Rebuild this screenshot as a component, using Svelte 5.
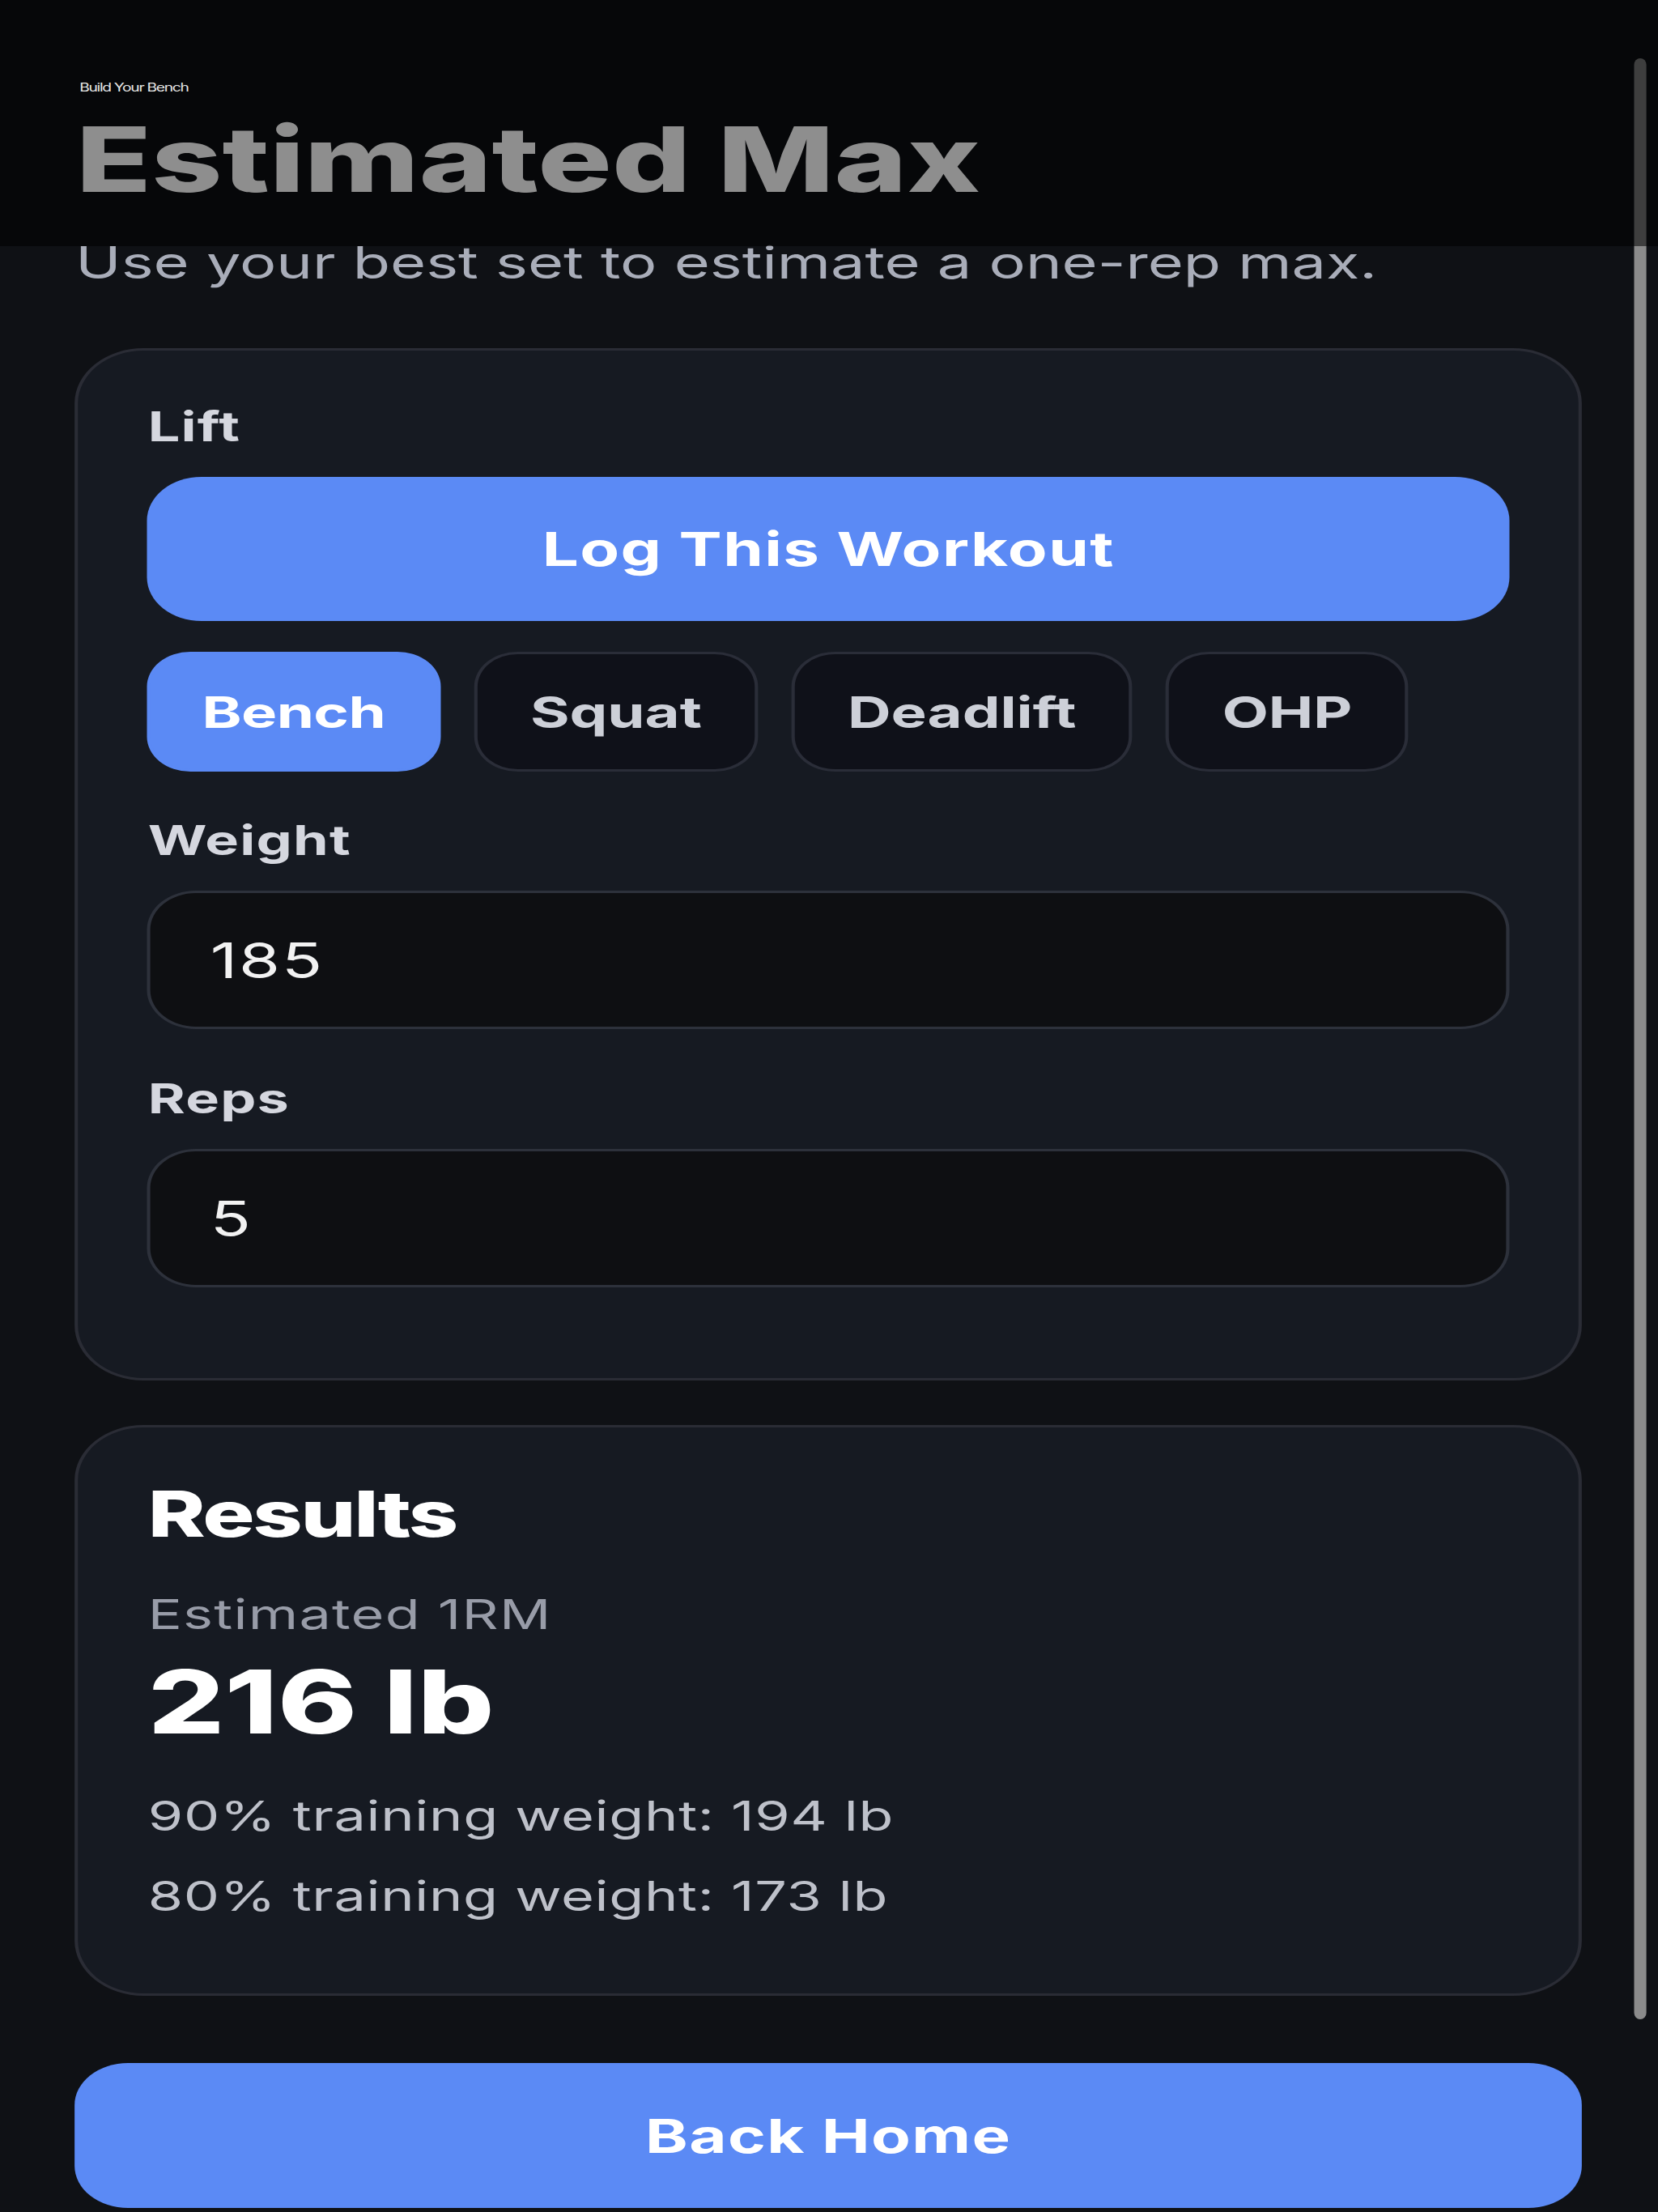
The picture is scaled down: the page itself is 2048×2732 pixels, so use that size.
<script>
	const lifts = ['Bench', 'Squat', 'Deadlift', 'OHP'];

	let lift = $state('Bench');
	let weight = $state(185);
	let reps = $state(5);

	// epley
	let oneRm = $derived(weight * (1 + reps / 30));
</script>

<main class="page">
	<div class="topbar"></div>
	<div class="scrollbar"></div>

	<p class="eyebrow">Build Your Bench</p>
	<h1>Estimated Max</h1>
	<p class="sub">Use your best set to estimate a one-rep max.</p>

	<section class="card inputs">
		<label class="label" for="log">Lift</label>
		<button id="log" class="primary log">Log This Workout</button>
		<div class="chips">
			{#each lifts as name}
				<button class="chip" class:active={lift === name} onclick={() => (lift = name)}>{name}</button>
			{/each}
		</div>
		<label class="label weight" for="weight">Weight</label>
		<input id="weight" bind:value={weight} />
		<label class="label reps" for="reps">Reps</label>
		<input id="reps" bind:value={reps} />
	</section>

	<section class="card results">
		<h2>Results</h2>
		<p class="muted">Estimated 1RM</p>
		<p class="big">{Math.round(oneRm)} lb</p>
		<p class="line first">90% training weight: {Math.round(oneRm * 0.9)} lb</p>
		<p class="line">80% training weight: {Math.round(oneRm * 0.8)} lb</p>
	</section>

	<button class="primary back">Back Home</button>
</main>

<style>
	:global(body) {
		margin: 0;
		background: #0f1115;
		overflow: hidden;
	}

	/* the whole shot is stretched sideways, so radii are elliptical before the scale */
	.page {
		position: relative;
		box-sizing: border-box;
		width: 1489.5px;
		height: 2732px;
		padding: 101px 66.9px 0;
		overflow: hidden;
		background: #0f1115;
		color: #fff;
		font-family: Inter, "Liberation Sans", sans-serif;
		line-height: 1;
		transform: scaleX(1.375);
		transform-origin: 0 0;
	}

	.topbar {
		position: absolute;
		top: 0;
		left: 0;
		right: 0;
		height: 304px;
		background: rgba(0, 0, 0, 0.55);
		z-index: 2;
	}

	.scrollbar {
		position: absolute;
		top: 72px;
		left: 1467.6px;
		width: 11px;
		height: 2422px;
		border-radius: 5.5px / 8px;
		background: #8b8b8b;
	}

	p, h1, h2 {
		margin: 0;
	}

	.eyebrow {
		position: relative;
		z-index: 3;
		height: 14px;
		padding-left: 4.5px;
		font-size: 14px;
		letter-spacing: -0.95px;
		color: #e8e8e8;
	}

	h1 {
		position: relative;
		z-index: 3;
		margin-top: 26px;
		padding-left: 1.5px;
		font-size: 111px;
		font-weight: 800;
		color: #8e8e8e;
	}

	.sub {
		margin-top: 45px;
		padding-left: 1px;
		font-size: 55px;
		color: #a9adb9;
	}

	.card {
		box-sizing: border-box;
		width: 1354.6px;
		background: #161a22;
		border: 3px solid #2a2c35;
		border-radius: 62px / 68px;
	}

	.inputs {
		margin-top: 78px;
		height: 1275px;
		padding: 68px 62px 0;
	}

	.label {
		display: block;
		padding-left: 1px;
		font-size: 51px;
		font-weight: 700;
		letter-spacing: 0.9px;
		color: #d5d7df;
	}

	.primary {
		display: block;
		border: none;
		background: #5b8af5;
		color: #fff;
		font-family: inherit;
		font-weight: 700;
		letter-spacing: 1px;
		width: 100%;
	}

	.log {
		margin-top: 37px;
		height: 178px;
		border-radius: 49px / 54px;
		font-size: 58px;
	}

	.chips {
		display: flex;
		gap: 30px;
		margin-top: 38px;
	}

	.chip {
		box-sizing: border-box;
		height: 148px;
		padding: 0 47.5px;
		border: 3px solid #2a2d38;
		border-radius: 39px / 43px;
		background: #0f1119;
		color: #cdd0d8;
		font-family: inherit;
		font-size: 54px;
		font-weight: 700;
	}

	.chip.active {
		padding: 0 46.5px;
		background: #5b8af5;
		border-color: #5b8af5;
		color: #fff;
		letter-spacing: -0.4px;
	}

	.weight {
		margin-top: 59px;
	}

	.reps {
		margin-top: 60px;
	}

	input {
		display: block;
		box-sizing: border-box;
		width: 100%;
		height: 171px;
		margin-top: 37px;
		padding: 0 54px;
		border: 3px solid #2d313b;
		border-radius: 44px / 48px;
		background: #0e0f12;
		color: #f2f2f2;
		font-family: inherit;
		font-size: 60px;
		letter-spacing: 1.3px;
		outline: none;
	}

	.results {
		margin-top: 55px;
		height: 705px;
		padding: 68px 62px 0;
	}

	.results p, h2 {
		padding-left: 1px;
	}

	h2 {
		font-size: 78px;
		font-weight: 800;
		letter-spacing: -1.7px;
	}

	.muted {
		margin-top: 59px;
		font-size: 51px;
		letter-spacing: 0.9px;
		color: #989ca8;
	}

	.big {
		margin-top: 29px;
		font-size: 108px;
		font-weight: 800;
	}

	.line {
		margin-top: 48px;
		font-size: 51px;
		letter-spacing: 0.5px;
		color: #bec1ca;
	}

	.line.first {
		margin-top: 61px;
	}

	.back {
		margin-top: 83px;
		width: 1354.6px;
		height: 179px;
		border-radius: 48px / 52px;
		font-size: 58px;
	}
</style>
